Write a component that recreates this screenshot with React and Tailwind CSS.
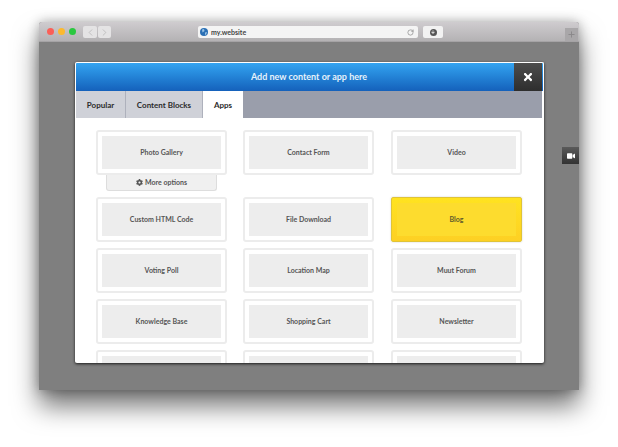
import { ChevronLeft, ChevronRight, RotateCw, Plus } from "lucide-react";
import { FaCog, FaTimes, FaVideo, FaArrowDown } from "react-icons/fa";

const rows = [
  ["Photo Gallery", "Contact Form", "Video"],
  ["Custom HTML Code", "File Download", "Blog"],
  ["Voting Poll", "Location Map", "Muut Forum"],
  ["Knowledge Base", "Shopping Cart", "Newsletter"],
  ["", "", ""],
];

function AppCard({ name }) {
  if (name === "Blog") {
    return (
      <div className="w-[131px] h-[45px] rounded-[2px] bg-gradient-to-b from-[#ffe320] to-[#fdd024] border border-[#e0c437] p-[5px] shadow-[0_0_2px_rgba(0,0,0,0.2)]">
        <div className="h-full pb-px bg-[#fddc2e] flex items-center justify-center text-[7px] font-bold text-[#5f5a2a]">
          {name}
        </div>
      </div>
    );
  }
  return (
    <div className="w-[131px] h-[45px] rounded-[3px] bg-white border-2 border-[#ececec] p-1">
      <div className="h-full pb-px bg-[#ededed] flex items-center justify-center text-[7px] font-bold text-[#555555]">
        {name}
      </div>
    </div>
  );
}

export default function App() {
  return (
    <div className="w-[618px] h-[447px] bg-white pt-[22px] pl-[39px] font-['Lato',sans-serif] overflow-hidden">
      {/* Browser window */}
      <div className="relative w-[540px] h-[368px] bg-[#7f7f7f] rounded-t-[3px] shadow-[0_16px_26px_rgba(0,0,0,0.55),0_0_12px_rgba(0,0,0,0.3)]">
        {/* Title bar */}
        <div className="h-5 flex items-center pl-2 rounded-t-[3px] bg-gradient-to-b from-[#cfcccf] to-[#b4b2b4] border-b border-[#a5a3a5]">
          <div className="flex gap-1">
            <div className="w-[7px] h-[7px] rounded-full bg-[#fb5f57]" />
            <div className="w-[7px] h-[7px] rounded-full bg-[#fcb92e]" />
            <div className="w-[7px] h-[7px] rounded-full bg-[#2ac83f]" />
          </div>
          <div className="flex gap-px ml-[7px] mt-px">
            <div className="w-[14px] h-3 rounded-[2px] bg-[#e4e3e4] flex items-center justify-center text-[#b0b0b0]">
              <ChevronLeft size={11} strokeWidth={1.5} />
            </div>
            <div className="w-[13px] h-3 rounded-[2px] bg-[#e4e3e4] flex items-center justify-center text-[#b0b0b0]">
              <ChevronRight size={11} strokeWidth={1.5} />
            </div>
          </div>
          <div className="w-[220px] h-3 ml-[87px] mt-px rounded-[2px] bg-[#f4f4f4] flex items-center pl-[2px] pr-1">
            <svg width="8" height="8" viewBox="0 0 8 8">
              <circle cx="4" cy="4" r="4" fill="#2a6fb5" />
              <path d="M2 1.5 L4 1 L4.5 3 L2.5 4.5 Z M5 4.5 L7 4 L6 7 L5 6.5 Z" fill="#9cc4e4" />
            </svg>
            <span className="ml-[3px] text-[7px] font-bold text-[#444444]">my.website</span>
            <RotateCw size={7} className="ml-auto text-[#777777]" />
          </div>
          <div className="w-5 h-3 ml-[5px] mt-px rounded-[2px] bg-[#f2f2f2] flex items-center justify-center">
            <div className="w-[7px] h-[7px] rounded-full bg-[#555555] flex items-center justify-center text-white">
              <FaArrowDown size={4} />
            </div>
          </div>
          <div className="ml-auto mr-px mt-auto w-[13px] h-[13px] bg-[#a9a7a9] flex items-center justify-center text-[#8a888a]">
            <Plus size={9} strokeWidth={2.5} />
          </div>
        </div>

        {/* Side video button */}
        <div className="absolute left-[523px] top-[125px] w-[17px] h-[17px] bg-gradient-to-b from-[#5a5a5a] to-[#333333] flex items-center justify-center text-white">
          <FaVideo size={8} />
        </div>

        {/* Modal */}
        <div className="absolute left-9 top-10 w-[469px] h-[301px] bg-white rounded-[2px] border-t border-x border-white overflow-hidden shadow-[0_1px_3px_rgba(0,0,0,0.8)]">
          <div className="h-7 flex bg-gradient-to-b from-[#34a4f1] to-[#1561bb]">
            <div className="flex-1 flex items-center justify-center pl-[28px] pb-px text-[9px] font-bold text-[#e6f2fb]">
              Add new content or app here
            </div>
            <div className="w-7 mr-px bg-gradient-to-b from-[#4d4d4d] to-[#2e2e2e] flex items-center justify-center text-white">
              <FaTimes size={12} />
            </div>
          </div>

          {/* Tabs */}
          <div className="h-[27px] mr-px flex bg-[#9a9eab] text-[8px] font-bold text-[#2b2b2b]">
            <div className="w-[50px] bg-[#cfd1d8] border-r border-[#aeb1bc] flex items-center justify-center">Popular</div>
            <div className="w-[77px] bg-[#cfd1d8] border-r border-[#aeb1bc] flex items-center justify-center">Content Blocks</div>
            <div className="w-[40px] bg-white flex items-center justify-center">Apps</div>
          </div>

          {/* App grid */}
          <div className="pl-5 pt-3 flex flex-col gap-1.5">
            {rows.map((row, i) => (
              <div key={i} className={`grid grid-cols-[147px_148px_131px] ${i === 0 ? "mb-4" : ""}`}>
                {row.map((name, j) => (
                  <div key={j} className="relative">
                    <AppCard name={name} />
                    {name === "Photo Gallery" && (
                      <div className="absolute left-[10px] top-[45px] w-[111px] h-4 rounded-b-[3px] bg-[#f0f0f0] border border-t-0 border-[#dddddd] flex items-center justify-center gap-[2px] text-[7px] font-bold text-[#555555]">
                        <FaCog size={7} />
                        More options
                      </div>
                    )}
                  </div>
                ))}
              </div>
            ))}
          </div>
        </div>
      </div>
    </div>
  );
}
